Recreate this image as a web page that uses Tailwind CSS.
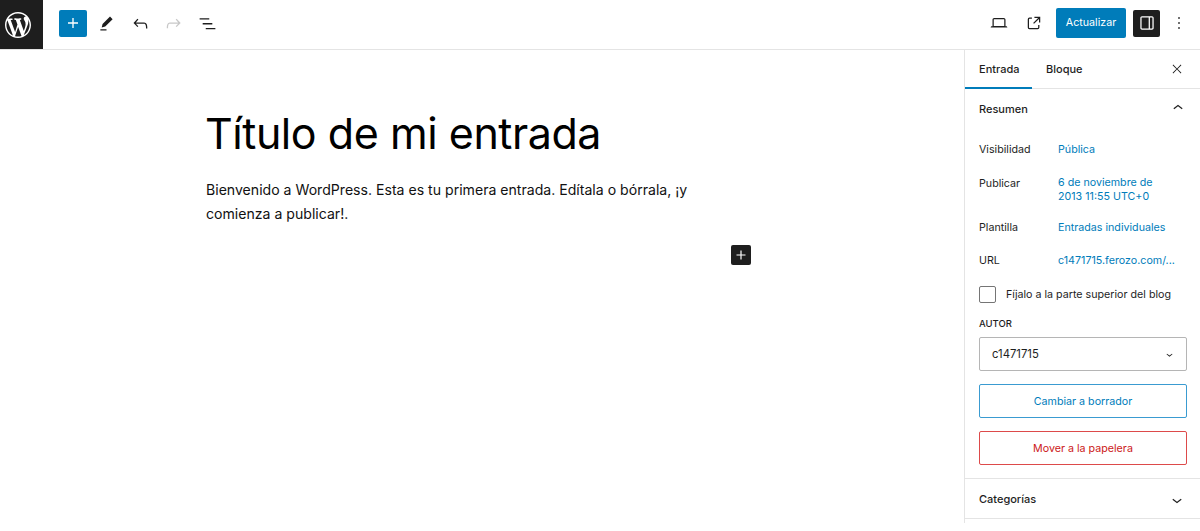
<!DOCTYPE html>
<html lang="es">
<head>
    <meta charset="UTF-8">
    <title>Editar entrada</title>
    <script src="https://cdn.jsdelivr.net/npm/@tailwindcss/browser@4"></script>
</head>
<body class="bg-white font-['Inter',sans-serif] text-[#1e1e1e] h-[531px] overflow-hidden">
    <!-- Top bar -->
    <header class="flex items-center h-[50px] border-b border-[#e4e4e4]">
        <div class="w-[43px] h-[49px] bg-[#1e1e1e] flex items-center pl-[5px]">
            <svg class="w-[26px] h-[26px] fill-white" viewBox="0 0 20 20"><path d="M20 10c0-5.51-4.49-10-10-10C4.48 0 0 4.49 0 10c0 5.52 4.48 10 10 10 5.51 0 10-4.48 10-10zM7.78 15.37L4.37 6.22c.55-.02 1.17-.08 1.17-.08.5-.06.44-1.13-.06-1.11 0 0-1.45.11-2.37.11-.18 0-.37 0-.58-.01C4.12 2.69 6.87 1.11 10 1.11c2.33 0 4.45.87 6.05 2.34-.68-.11-1.65.39-1.65 1.58 0 .74.45 1.36.9 2.1.35.61.55 1.36.55 2.46 0 1.49-1.4 5-1.4 5l-3.03-8.37c.54-.02.82-.17.82-.17.5-.05.44-1.25-.06-1.22 0 0-1.44.12-2.38.12-.87 0-2.33-.12-2.33-.12-.5-.03-.56 1.2-.06 1.22l.92.08 1.26 3.41zM17.41 10c.24-.64.74-1.87.43-4.25.7 1.29 1.05 2.71 1.05 4.25 0 3.29-1.73 6.24-4.4 7.78.97-2.59 1.94-5.2 2.92-7.78zM6.1 18.09C3.12 16.65 1.11 13.53 1.11 10c0-1.3.23-2.48.72-3.59C3.25 10.3 4.67 14.2 6.1 18.09zm4.03-6.63l2.58 6.98c-.86.29-1.76.45-2.71.45-.79 0-1.57-.11-2.29-.33.81-2.38 1.62-4.74 2.42-7.1z"/></svg>
        </div>
        <div class="flex items-center ml-4 mb-[3px]">
            <button class="w-[28px] h-[27px] bg-[#007cba] rounded-[2px] flex items-center justify-center">
                <svg class="w-5 h-5 fill-white" viewBox="0 0 24 24"><path d="M18 11.2h-5.2V6h-1.6v5.2H6v1.6h5.2V18h1.6v-5.2H18z"/></svg>
            </button>
            <svg class="w-[21px] h-[21px] ml-[9px] fill-[#1e1e1e]" viewBox="0 0 24 24"><path d="m19 7-3-3-8.5 8.5-1 4 4-1L19 7Zm-7 11.5H5V20h7v-1.5Z"/></svg>
            <svg class="w-[21px] h-[21px] ml-[13px] fill-[#1e1e1e]" viewBox="0 0 24 24"><path d="M18.3 11.7c-.6-.6-1.4-.9-2.3-.9H6.7l2.9-3.3-1.1-1-4.5 5L8.5 16l1-1-2.7-2.7H16c.5 0 .9.2 1.3.5 1 1 1 3.4 1 4.5v.3h1.5v-.2c0-1.5 0-4.3-1.5-5.7z"/></svg>
            <svg class="w-[21px] h-[21px] ml-[12px] fill-[#c8c8c8]" viewBox="0 0 24 24"><path d="M15.6 6.5l-1.1 1 2.9 3.3H8c-.9 0-1.7.3-2.3.9-1.4 1.5-1.4 4.2-1.4 5.6v.2h1.5v-.3c0-1.1 0-3.5 1-4.5.3-.3.7-.5 1.3-.5h9.2L14.5 15l1.1 1.1 4.6-4.6-4.6-5z"/></svg>
            <svg class="w-[21px] h-[21px] ml-[13px] fill-[#1e1e1e]" viewBox="0 0 24 24"><path d="M3 6h11v1.5H3V6Zm3.5 5.5h11V13h-11v-1.5ZM21 17H10v1.5h11V17Z"/></svg>
        </div>
        <div class="flex items-center ml-auto mb-[3px]">
            <svg class="w-5 h-5 fill-[#1e1e1e]" viewBox="0 0 24 24"><path d="M20.5 16h-.7V8c0-1.1-.9-2-2-2H6.2c-1.1 0-2 .9-2 2v8h-.7c-.8 0-1.5.7-1.5 1.5h20c0-.8-.7-1.5-1.5-1.5zM5.7 8c0-.3.2-.5.5-.5h11.6c.3 0 .5.2.5.5v7.6H5.7V8z"/></svg>
            <svg class="w-5 h-5 ml-[15px] fill-[#1e1e1e]" viewBox="0 0 24 24"><path d="M19.5 4.5h-7V6h4.44l-5.97 5.97 1.06 1.06L18 7.06v4.44h1.5v-7Zm-13 1a2 2 0 0 0-2 2v10a2 2 0 0 0 2 2h10a2 2 0 0 0 2-2v-3H17v3a.5.5 0 0 1-.5.5h-10a.5.5 0 0 1-.5-.5v-10a.5.5 0 0 1 .5-.5h3V5.5h-3Z"/></svg>
            <button class="ml-[12px] w-[70px] h-[30px] bg-[#007cba] rounded-[2px] text-white text-[10.7px]">Actualizar</button>
            <button class="ml-[7px] w-[27px] h-[27px] bg-[#1e1e1e] rounded-[2px] flex items-center justify-center">
                <svg class="w-5 h-5 fill-white" viewBox="0 0 24 24"><path d="M18 4H6c-1.1 0-2 .9-2 2v12c0 1.1.9 2 2 2h12c1.1 0 2-.9 2-2V6c0-1.1-.9-2-2-2zm-4 14.5H6c-.3 0-.5-.2-.5-.5V6c0-.3.2-.5.5-.5h8v13zm4.5-.5c0 .3-.2.5-.5.5h-2.5v-13H18c.3 0 .5.2.5.5v12z"/></svg>
            </button>
            <svg class="w-5 h-5 ml-[9px] mr-[11px] fill-[#1e1e1e]" viewBox="0 0 24 24"><path d="M13 19h-2v-2h2v2zm0-6h-2v-2h2v2zm0-6h-2V5h2v2z"/></svg>
        </div>
    </header>

    <div class="flex h-[473px]">
        <!-- Editor canvas -->
        <main class="flex-1 pl-[205px] pt-[52px]">
            <h1 class="text-[43px] leading-[62px] font-normal tracking-[-0.45px] text-black">Título de mi entrada</h1>
            <p class="mt-[14px] ml-[1px] w-[490px] text-[14.1px] leading-[24px] text-[#111]">Bienvenido a WordPress. Esta es tu primera entrada. Edítala o bórrala, ¡y comienza a publicar!.</p>
            <div class="mt-[19px] ml-[526px] w-5 h-5 bg-[#1e1e1e] rounded-[2px] flex items-center justify-center">
                <svg class="w-[18px] h-[18px] fill-white" viewBox="0 0 24 24"><path d="M18 11.2h-5.2V6h-1.6v5.2H6v1.6h5.2V18h1.6v-5.2H18z"/></svg>
            </div>
        </main>

        <!-- Settings sidebar -->
        <aside class="w-[236px] border-l border-[#e4e4e4] text-[10.7px]">
            <div class="flex items-center h-[39px] border-b border-[#e4e4e4] font-medium text-[11px]">
                <div class="w-[67px] h-[39px] pl-[14px] pt-[2px] flex items-center border-b-2 border-[#007cba]">Entrada</div>
                <div class="ml-[14px]">Bloque</div>
                <svg class="w-[14px] h-[14px] ml-auto mr-[16px] fill-[#1e1e1e]" viewBox="0 0 24 24"><path d="m13.06 12 6.47-6.47-1.06-1.06L12 10.94 5.53 4.47 4.47 5.53 10.94 12l-6.47 6.47 1.06 1.06L12 13.06l6.47 6.47 1.06-1.06L13.06 12Z"/></svg>
            </div>

            <section class="pl-[14px] pr-[13px] border-b border-[#e4e4e4] h-[390px]">
                <div class="flex items-center justify-between h-[39px] pt-[2px] font-medium text-[11px]">
                    <span>Resumen</span>
                    <svg class="w-5 h-5 mr-[-1px] mb-[3px] fill-[#1e1e1e]" viewBox="0 0 24 24"><path d="M6.5 12.4L12 8l5.5 4.4-.9 1.2L12 10l-4.5 3.6-1-1.2z"/></svg>
                </div>
                <div class="mt-[13px] flex h-[18px] items-center"><span class="w-[79px]">Visibilidad</span><span class="text-[#007cba]">Pública</span></div>
                <div class="mt-[17px] flex"><span class="w-[79px]">Publicar</span><span class="text-[#007cba] leading-[13.5px] w-[110px]">6 de noviembre de 2013 11:55 UTC+0</span></div>
                <div class="mt-[16px] flex h-[18px] items-center"><span class="w-[79px]">Plantilla</span><span class="text-[#007cba]">Entradas individuales</span></div>
                <div class="mt-[15px] flex h-[18px] items-center"><span class="w-[79px]">URL</span><span class="text-[#007cba]">c1471715.ferozo.com/...</span></div>
                <label class="mt-[15px] flex items-center">
                    <span class="w-[17px] h-[17px] border border-[#757575] rounded-[2px]"></span>
                    <span class="ml-[10px] pt-[2px]">Fíjalo a la parte superior del blog</span>
                </label>
                <div class="mt-[14px] text-[9.5px] font-medium leading-[14px] uppercase">Autor</div>
                <div class="mt-[6px] flex items-center justify-between h-[34px] pl-[12px] pr-[10px] border border-[#b5b5b5] rounded-[2px] text-[11.3px]">
                    <span>c1471715</span>
                    <svg class="w-[13px] h-[13px] fill-[#1e1e1e]" viewBox="0 0 24 24"><path d="M17.5 11.6L12 16l-5.5-4.4.9-1.2L12 14l4.6-3.6 1 1.2z"/></svg>
                </div>
                <button class="mt-[13px] w-full h-[34px] pt-[2px] border border-[#3a9bd1] rounded-[2px] text-[#007cba]">Cambiar a borrador</button>
                <button class="mt-[13px] w-full h-[34px] pt-[2px] border border-[#dd4a4a] rounded-[2px] text-[#cc1818]">Mover a la papelera</button>
            </section>

            <section class="flex items-center justify-between h-[40px] pl-[14px] pr-[13px] pt-[2px] border-b border-[#e4e4e4] font-medium text-[11px]">
                <span>Categorías</span>
                <svg class="w-5 h-5 fill-[#1e1e1e]" viewBox="0 0 24 24"><path d="M17.5 11.6L12 16l-5.5-4.4.9-1.2L12 14l4.6-3.6 1 1.2z"/></svg>
            </section>
        </aside>
    </div>
</body>
</html>
